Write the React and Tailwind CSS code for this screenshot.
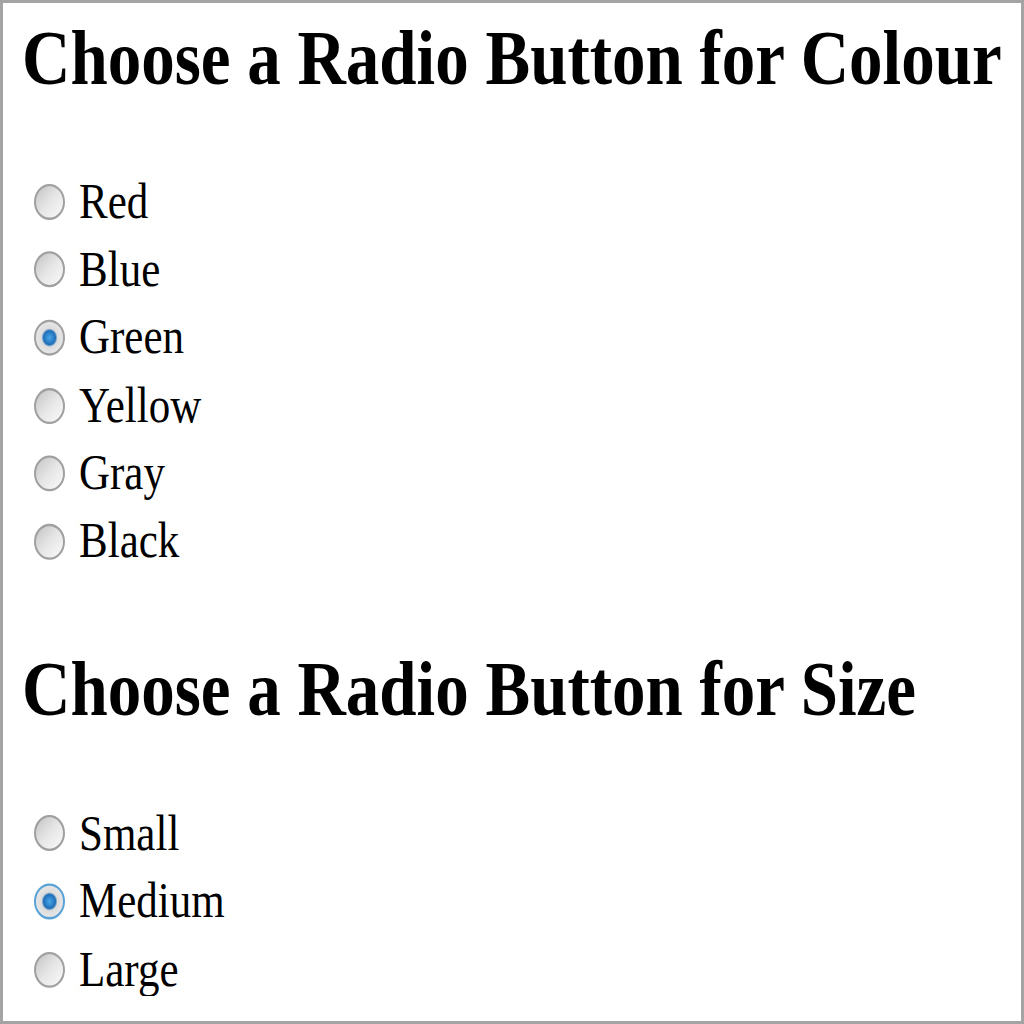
import { useState } from 'react'

const colours = ['Red', 'Blue', 'Green', 'Yellow', 'Gray', 'Black']
const sizes = ['Small', 'Medium', 'Large']

function RadioRow({ name, value, checked, focused, onChange }) {
  return (
    <label className="flex h-[58.6px] items-center">
      <input
        type="radio"
        name={name}
        value={value}
        checked={checked}
        onChange={onChange}
        className={`ml-[31px] mr-[14px] h-[31px] w-[31px] shrink-0 appearance-none rounded-full border-2 bg-gradient-to-br from-[#c4c4c4] via-[#e6e6e6] to-[#fafafa] ${
          focused ? 'border-[#5aa3d6]' : 'border-[#a0a0a0]'
        } ${
          checked
            ? 'bg-[radial-gradient(circle,#4aa6e8_0,#1f6fb8_6px,#dcdcdc_8px,#f0f0f0_100%)]'
            : ''
        }`}
      />
      <span className="text-[43px] leading-[58.6px] text-black">{value}</span>
    </label>
  )
}

export default function App() {
  const [colour, setColour] = useState('Green')
  const [size, setSize] = useState('Medium')

  return (
    <div className="h-[1024px] w-[1024px] overflow-hidden border-[3px] border-[#a4a4a4] bg-white font-['Liberation_Serif','Times_New_Roman',serif]">
      <div className="origin-top scale-y-[1.16]">
        <h1 className="ml-[19px] pt-[14px] text-[67px] font-bold leading-[67px] text-black">
          Choose a Radio Button for Colour
        </h1>
        <div className="mt-[61px]">
          {colours.map((c) => (
            <RadioRow
              key={c}
              name="colour"
              value={c}
              checked={colour === c}
              onChange={() => setColour(c)}
            />
          ))}
        </div>
        <h1 className="ml-[19px] mt-[64px] text-[67px] font-bold leading-[67px] text-black">
          Choose a Radio Button for Size
        </h1>
        <div className="mt-[62px]">
          {sizes.map((s) => (
            <RadioRow
              key={s}
              name="size"
              value={s}
              checked={size === s}
              focused={s === 'Medium'}
              onChange={() => setSize(s)}
            />
          ))}
        </div>
      </div>
    </div>
  )
}
